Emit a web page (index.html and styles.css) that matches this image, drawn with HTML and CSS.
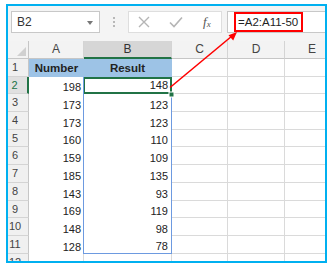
FILE: index.html
```html
<!DOCTYPE html>
<html>
<head>
<meta charset="utf-8">
<link rel="stylesheet" href="styles.css">
</head>
<body>
<div class="frame">
  <div class="toolbar">
    <div class="namebox"><span>B2</span><span class="dd"></span></div>
    <div class="dots"><i></i><i></i><i></i></div>
    <div class="btns">
      <svg class="ico" width="12" height="12" viewBox="0 0 12 12"><path d="M1 1L11 11M11 1L1 11" stroke="#b5b5b5" stroke-width="1.4" fill="none"/></svg>
      <svg class="ico" width="14" height="12" viewBox="0 0 14 12"><path d="M1 6.5L5 10.5L13 1.5" stroke="#b5b5b5" stroke-width="1.6" fill="none"/></svg>
      <span class="fx">f<sub>x</sub></span>
    </div>
    <div class="fbar"><span class="formula">=A2:A11-50</span></div>
  </div>
  <div class="grid">
    <div class="corner"><span class="tri"></span></div>
    <div class="ch">A</div>
    <div class="ch on">B</div>
    <div class="ch">C</div>
    <div class="ch">D</div>
    <div class="ch">E</div>

    <div class="rh">1</div>
    <div class="c h1">Number</div>
    <div class="c h1 h1b">Result</div>
    <div class="c"></div><div class="c"></div><div class="c"></div>

    <div class="rh on">2</div>
    <div class="c a">198</div>
    <div class="c b sel">148</div>
    <div class="c"></div><div class="c"></div><div class="c"></div>

    <div class="rh">3</div>
    <div class="c a">173</div>
    <div class="c b">123</div>
    <div class="c"></div><div class="c"></div><div class="c"></div>

    <div class="rh">4</div>
    <div class="c a">173</div>
    <div class="c b">123</div>
    <div class="c"></div><div class="c"></div><div class="c"></div>

    <div class="rh">5</div>
    <div class="c a">160</div>
    <div class="c b">110</div>
    <div class="c"></div><div class="c"></div><div class="c"></div>

    <div class="rh">6</div>
    <div class="c a">159</div>
    <div class="c b">109</div>
    <div class="c"></div><div class="c"></div><div class="c"></div>

    <div class="rh">7</div>
    <div class="c a">185</div>
    <div class="c b">135</div>
    <div class="c"></div><div class="c"></div><div class="c"></div>

    <div class="rh">8</div>
    <div class="c a">143</div>
    <div class="c b">93</div>
    <div class="c"></div><div class="c"></div><div class="c"></div>

    <div class="rh">9</div>
    <div class="c a">169</div>
    <div class="c b">119</div>
    <div class="c"></div><div class="c"></div><div class="c"></div>

    <div class="rh">10</div>
    <div class="c a">148</div>
    <div class="c b">98</div>
    <div class="c"></div><div class="c"></div><div class="c"></div>

    <div class="rh">11</div>
    <div class="c a">128</div>
    <div class="c b last">78</div>
    <div class="c"></div><div class="c"></div><div class="c"></div>

    <div class="rh">12</div>
    <div class="c a12"></div>
    <div class="c"></div>
    <div class="c"></div><div class="c"></div><div class="c"></div>
  </div>
</div>
<svg class="overlay" width="334" height="270" viewBox="0 0 334 270">
  <rect x="169" y="92" width="5" height="5" fill="#217346" stroke="#fff" stroke-width="1"/>
  <line x1="170" y1="87.5" x2="232" y2="36" stroke="#ff0000" stroke-width="1.6"/>
  <path d="M237 32L228.5 35.2L233.2 40.4Z" fill="#ff0000"/>
</svg>
</body>
</html>
```

FILE: styles.css
```css
* { box-sizing: border-box; }
html, body { margin: 0; padding: 0; background: #fff; }
body {
  width: 334px; height: 270px; position: relative;
  font-family: "Liberation Sans", Arial, sans-serif;
}
.frame {
  margin: 4px 0 0 6px;
  width: 321px; height: 259px;
  border: 2px solid #00b0f0;
  overflow: hidden;
  background: #fff;
}
.toolbar {
  height: 35px;
  background: #f4f4f4;
  display: flex;
  align-items: flex-start;
  padding-top: 5px;
  padding-left: 3px;
  white-space: nowrap;
}
.namebox {
  width: 89px; height: 22px;
  background: #fff;
  border: 1px solid #c8c8c8;
  display: flex; align-items: center; justify-content: space-between;
  padding: 0 6px 0 5px;
  font-size: 12px; color: #333;
  flex: none;
}
.dd {
  width: 0; height: 0;
  border-left: 3.5px solid transparent;
  border-right: 3.5px solid transparent;
  border-top: 4px solid #777;
  margin-top: 1px;
}
.dots {
  width: 28px; height: 22px; flex: none;
  display: flex; flex-direction: column; align-items: center; justify-content: center; gap: 2px;
}
.dots i { display: block; width: 2px; height: 2px; background: #b8b8b8; }
.btns {
  width: 94px; height: 22px; flex: none;
  background: #fff; border: 1px solid #dedede;
  display: flex; align-items: center;
  padding-left: 9px;
}
.btns .ico { flex: none; }
.btns .ico + .ico { margin-left: 19px; }
.fx {
  margin-left: 20px;
  font-family: "Liberation Serif", serif; font-style: italic;
  font-size: 13px; color: #555;
}
.fx sub { font-size: 9px; vertical-align: -1px; }
.fbar {
  margin-left: 5px;
  flex: none; width: 120px; height: 22px;
  background: #fff; border: 1px solid #c8c8c8;
  padding: 0 0 0 6px;
  display: flex; align-items: center;
}
.formula {
  display: block;
  border: 2px solid #ff0000;
  height: 20px; width: 69px;
  font-size: 11.5px; color: #222;
  padding-left: 2px;
  line-height: 16px;
}
.grid {
  display: grid;
  grid-template-columns: 21px 55px 88px 56px 57px 55px;
  grid-template-rows: 18px repeat(12, 17.7px);
  width: 332px;
  font-size: 11px; color: #222;
}
.corner {
  background: #f3f3f3;
  border-right: 1px solid #c6c6c6; border-bottom: 1px solid #c6c6c6;
  position: relative;
}
.tri {
  position: absolute; right: 2px; bottom: 2px;
  width: 0; height: 0;
  border-left: 9px solid transparent;
  border-bottom: 9px solid #d0d0d0;
}
.ch {
  background: #f3f3f3;
  border-right: 1px solid #d4d4d4; border-bottom: 1px solid #c6c6c6;
  text-align: center; font-size: 12px; color: #444; line-height: 17px;
}
.ch.on { background: #d6d6d6; border-bottom: 2px solid #217346; color: #333; }
.rh {
  background: #f0f0f0;
  border-right: 1px solid #c6c6c6; border-bottom: 1px solid #d4d4d4;
  text-align: center; padding-right: 6px;
  font-size: 11px; color: #444; line-height: 17px;
}
.rh.on { background: #e0e0e0; color: #217346; border-right: 2px solid #217346; }
.c {
  border-right: 1px solid #dadada; border-bottom: 1px solid #dadada;
  display: flex; align-items: flex-end; justify-content: flex-end;
  padding: 0 2px 1px 0; line-height: 1;
}
.h1 {
  background: #9dc3e6; border-right: none; border-bottom: none;
  justify-content: center; font-weight: bold; font-size: 11.5px; padding: 0 0 2px 0;
}
.h1b { border-right: 1px solid #9dc3e6; }
.a { border-bottom: none; border-right: 1px solid #6d9ae0; }
.b { border-bottom: none; border-right: 1px solid #6d9ae0; padding-right: 3px; }
.b.last { border-bottom: 1px solid #6d9ae0; }
.sel { border: 2px solid #217346; border-left-width: 1px; padding-right: 2px; }
.a12 { border-bottom: none; }
.overlay { position: absolute; left: 0; top: 0; pointer-events: none; }
```
